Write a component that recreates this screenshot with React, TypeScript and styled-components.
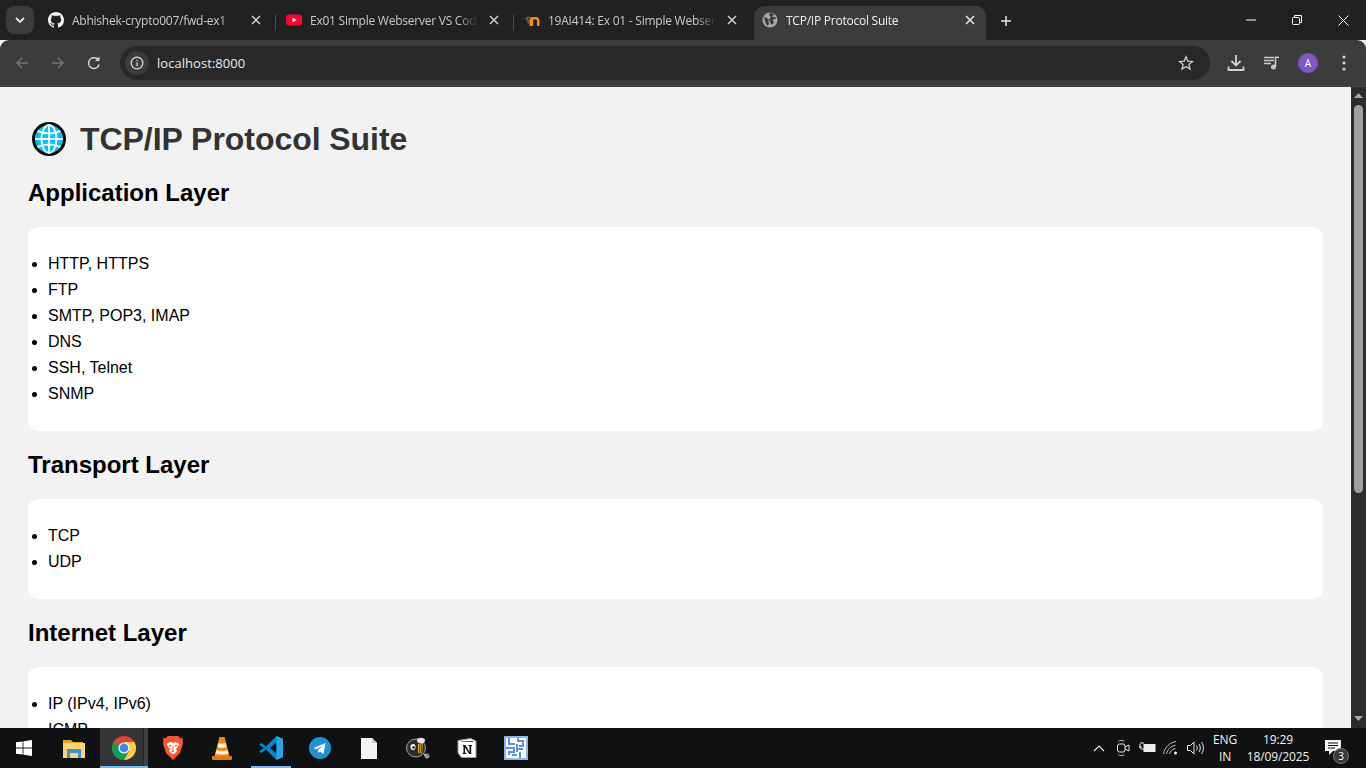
import React from "react";
import styled, { createGlobalStyle } from "styled-components";

const UI = `"Open Sans", "Noto Sans", sans-serif`;
const Global = createGlobalStyle`
  html, body { margin: 0; padding: 0; height: 100%; overflow: hidden; background: #f2f2f2; }
  #root { height: 100%; }
  * { box-sizing: border-box; }
`;
const Shell = styled.div`display:flex;flex-direction:column;width:1366px;height:768px;overflow:hidden;`;

const TabStrip = styled.div`display:flex;align-items:flex-end;height:40px;background:#202121;flex:none;position:relative;`;
const TabMenu = styled.div`width:28px;height:28px;margin:0 3px 6px 6px;border-radius:8px;background:#3a3b3b;display:flex;align-items:center;justify-content:center;flex:none;`;
const Tab = styled.div<{ $active?: boolean; $w: number; $pl: number; $pr: number }>`
  width:${p => p.$w}px;height:34px;flex:none;display:flex;align-items:center;position:relative;
  padding:0 ${p => p.$pr}px 6px ${p => p.$pl}px;color:${p => (p.$active ? "#f0f0f0" : "#c8c9c9")};
  background:${p => (p.$active ? "#3c3c3c" : "transparent")};
  border-radius:${p => (p.$active ? "10px 10px 0 0" : "0")};
`;
const Favicon = styled.span`width:16px;height:16px;flex:none;display:flex;`;
const TabTitle = styled.span`
  flex:1;min-width:0;margin:2px 8px 0;font:12px/16px ${UI};white-space:nowrap;overflow:hidden;letter-spacing:-.24px;
  -webkit-mask-image:linear-gradient(90deg,#000 calc(100% - 20px),transparent);
`;
const TabClose = styled.span`width:16px;height:16px;flex:none;display:flex;align-items:center;justify-content:center;`;
const TabSep = styled.span`width:1px;height:16px;background:#4f5050;flex:none;margin-bottom:9px;`;
const NewTab = styled.span`width:16px;height:16px;margin:0 0 11px 12px;display:flex;`;
const WindowControls = styled.div`margin-left:auto;display:flex;height:40px;align-self:flex-start;`;
const WinBtn = styled.div`width:46px;height:40px;display:flex;align-items:center;justify-content:center;`;

const Toolbar = styled.div`height:47px;background:#3c3c3c;border-radius:9px 9px 0 0;display:flex;align-items:center;flex:none;padding:0 8px 1px 4px;border-bottom:1px solid #444;`;
const NavBtn = styled.div`width:36px;height:34px;display:flex;align-items:center;justify-content:center;flex:none;`;
const Omnibox = styled.div`width:1090px;height:34px;margin-left:8px;background:#282828;border-radius:17px;display:flex;align-items:center;padding:0 15px 0 5px;margin-right:8px;flex:none;`;
const InfoChip = styled.div`width:24px;height:24px;border-radius:12px;background:#3c3c3c;display:flex;align-items:center;justify-content:center;flex:none;`;
const Url = styled.span`margin-left:8px;flex:1;font:13px/18px ${UI};color:#e8e8e8;letter-spacing:.05px;`;
const Avatar = styled.div`width:20px;height:20px;border-radius:50%;background:#7e57c2;color:#fff;font:10px/20px ${UI};text-align:center;`;

const Viewport = styled.div`flex:1;min-height:0;display:flex;overflow:hidden;background:#f2f2f2;`;
const Page = styled.main`flex:1;min-width:0;padding:33px 28px 0;font-family:"Liberation Sans",Arial,sans-serif;overflow:hidden;`;
const Title = styled.h1`margin:0 0 21px;font-size:32px;line-height:38px;font-weight:700;color:#333;display:flex;align-items:center;white-space:pre;letter-spacing:-.05px;`;
const GlobeWrap = styled.span`width:36px;height:36px;margin:0 13px 0 3px;display:flex;flex:none;`;
const LayerHeading = styled.h2`margin:20px 0;font-size:24px;line-height:28px;font-weight:700;color:#000;`;
const Card = styled.section`background:#fff;border-radius:10px;padding:8px 0;`;
const List = styled.ul`margin:16px 0;padding-left:20px;`;
const Item = styled.li`font-size:16px;line-height:26px;color:#000;`;

const Scrollbar = styled.div`width:15px;flex:none;background:#2c2c2c;display:flex;flex-direction:column;align-items:center;justify-content:space-between;padding:6px 0 7px;position:relative;`;
const Thumb = styled.div`position:absolute;left:3px;top:18px;width:9px;height:388px;border-radius:5px;background:#9f9f9f;`;

const Taskbar = styled.footer`height:40px;background:#101112;flex:none;display:flex;align-items:stretch;`;
const TaskItem = styled.div<{ $w?: number; $active?: boolean; $line?: boolean }>`
  width:${p => p.$w ?? 49}px;flex:none;display:flex;align-items:center;justify-content:center;position:relative;
  background:${p => (p.$active ? "#333435" : "transparent")};
  ${p => (p.$active ? `&::before{content:"";position:absolute;top:0;bottom:0;right:0;width:4px;background:#3f4041;border-left:1px solid #242526;}` : "")}
  ${p => (p.$active || p.$line ? `&::after{content:"";position:absolute;bottom:0;height:2px;background:#76b9ed;left:50%;transform:translateX(-50%);width:${p.$active ? 48 : 40}px;}` : "")}
`;
const Tray = styled.div`margin-left:auto;display:flex;align-items:stretch;padding-right:13px;`;
const TrayIcon = styled.div<{ $w: number }>`width:${p => p.$w}px;height:40px;display:flex;align-items:center;justify-content:center;flex:none;`;
const TrayText = styled.div<{ $w: number }>`width:${p => p.$w}px;align-self:center;text-align:center;font:12px/17px ${UI};color:#f0f0f0;flex:none;letter-spacing:-.1px;`;
const ChatWrap = styled.span`display:flex;align-self:flex-start;margin-top:12px;`;
const Badge = styled.span`position:absolute;left:20px;top:20px;width:16px;height:16px;border-radius:50%;background:#3a3a3a;border:1px solid #777;color:#fff;font:10px/14px ${UI};text-align:center;`;

const X = ({ c = "#d0d0d0" }: { c?: string }) => (
  <svg width="10" height="10" viewBox="0 0 10 10"><path d="M1 1l8 8M9 1L1 9" stroke={c} strokeWidth="1.5" fill="none" /></svg>
);
const Github = () => (
  <svg width="16" height="16" viewBox="0 0 16 16"><path fill="#f2f2f2" d="M8 0C3.58 0 0 3.58 0 8c0 3.54 2.29 6.53 5.47 7.59.4.07.55-.17.55-.38 0-.19-.01-.82-.01-1.49-2.01.37-2.53-.49-2.69-.94-.09-.23-.48-.94-.82-1.13-.28-.15-.68-.52-.01-.53.63-.01 1.08.58 1.23.82.72 1.21 1.87.87 2.33.66.07-.52.28-.87.51-1.07-1.78-.2-3.64-.89-3.64-3.95 0-.87.31-1.59.82-2.15-.08-.2-.36-1.02.08-2.12 0 0 .67-.21 2.2.82.64-.18 1.32-.27 2-.27s1.36.09 2 .27c1.53-1.04 2.2-.82 2.2-.82.44 1.1.16 1.92.08 2.12.51.56.82 1.27.82 2.15 0 3.07-1.87 3.75-3.65 3.95.29.25.54.73.54 1.48 0 1.07-.01 1.93-.01 2.2 0 .21.15.46.55.38A8.01 8.01 0 0016 8c0-4.42-3.58-8-8-8z" /></svg>
);
const Youtube = () => (
  <svg width="16" height="16" viewBox="0 0 16 16"><rect y="2.5" width="16" height="11" rx="3" fill="#ff0033" /><path d="M6.5 5.6L10.7 8l-4.2 2.4z" fill="#fff" /></svg>
);
const Moodle = () => (
  <svg width="16" height="16" viewBox="0 0 16 16"><path d="M5.500 14V8.200c0-1.800 1.200-3.200 3-3.200h3.500c2.200 0 3.500 1.400 3.500 3.400V14h-2.600V8.800c0-.8-.4-1.300-1.100-1.300h-1.600c-.7 0-1.100.5-1.100 1.300V14z" fill="#f08a24" /><path d="M0 6.500L5 4.500l2 .8-3.500 1.200V9L3 11 2.500 6.800z" fill="#77706a" /><path d="M3.500 7.500h1.500v4H3.500z" fill="#a1521c" /></svg>
);
const GlobeFav = () => (
  <svg width="16" height="16" viewBox="0 0 16 16"><circle cx="8" cy="8" r="7.500" fill="#a5a8ab" /><path d="M2 5l3 1 2 2-1 1 1 2-1 3-2-2-1-3zM8 1l3 .5 1 1.500-2 1 1 1 3 .5-.5 1.500-3 .5 1.500 3-2.500 2.500L8 10 7 7.500 9 5 7 3z" fill="#3c3c3c" /></svg>
);
const Globe = () => (
  <svg width="36" height="36" viewBox="0 0 36 36">
    <circle cx="18" cy="18" r="15.500" fill="#0cc0f5" stroke="#0a0a0a" strokeWidth="3" />
    <g fill="none" stroke="#eafaff" strokeWidth="2">
      <ellipse cx="18" cy="18" rx="7.500" ry="14" />
      <path d="M18 4v28M4 18h28M6.500 10c7 3 16 3 23 0M6.500 26c7-3 16-3 23 0" />
    </g>
  </svg>
);
const Back = ({ c }: { c: string }) => (
  <svg width="16" height="16" viewBox="0 0 16 16"><path d="M14 8H3M8 3L3 8l5 5" stroke={c} strokeWidth="1.500" fill="none" /></svg>
);
const Forward = ({ c }: { c: string }) => (
  <svg width="16" height="16" viewBox="0 0 16 16"><path d="M2 8h11M8 3l5 5-5 5" stroke={c} strokeWidth="1.500" fill="none" /></svg>
);
const Reload = () => (
  <svg width="16" height="16" viewBox="0 0 16 16"><path d="M13 9.500A5.300 5.300 0 118.500 2.800c1.700 0 3 .8 4 2" stroke="#d6d6d6" strokeWidth="1.500" fill="none" /><path d="M13.500 1.500v4.500H9z" fill="#d6d6d6" /></svg>
);
const Info = () => (
  <svg width="16" height="16" viewBox="0 0 16 16"><circle cx="8" cy="8" r="5.800" stroke="#dcdcdc" strokeWidth="1.300" fill="none" /><path d="M8 7.300v4M8 4.700v1.300" stroke="#dcdcdc" strokeWidth="1.300" /></svg>
);
const Star = () => (
  <svg width="18" height="18" viewBox="0 0 18 18"><path d="M9 2.800l1.800 4.300 4.600.4-3.500 3 1.100 4.500L9 12.600l-4 2.400 1.100-4.500-3.500-3 4.600-.4z" stroke="#c6c6c6" strokeWidth="1.400" fill="none" /></svg>
);
const Download = () => (
  <svg width="18" height="18" viewBox="0 0 18 18"><path d="M9 1v10M4.500 7L9 11.500 13.500 7" stroke="#d0d0d0" strokeWidth="1.800" fill="none" /><path d="M1.500 12.500v3.500h15v-3.500" stroke="#d0d0d0" strokeWidth="1.800" fill="none" /></svg>
);
const Music = () => (
  <svg width="16" height="14" viewBox="0 0 16 14"><path d="M0 1.500h10M0 4.500h10M0 7.500h7" stroke="#c8c8c8" strokeWidth="1.500" /><path d="M11.500 11V1.200H15" stroke="#c8c8c8" strokeWidth="1.600" fill="none" /><circle cx="9.500" cy="11" r="2.500" fill="#c8c8c8" /></svg>
);
const Dots = () => (
  <svg width="4" height="16" viewBox="0 0 4 16"><circle cx="2" cy="2" r="1.600" fill="#d0d0d0" /><circle cx="2" cy="8" r="1.600" fill="#d0d0d0" /><circle cx="2" cy="14" r="1.600" fill="#d0d0d0" /></svg>
);
const Tri = ({ down }: { down?: boolean }) => (
  <svg width="9" height="5" viewBox="0 0 9 5"><path d={down ? "M0 0h9L4.500 5z" : "M0 5h9L4.500 0z"} fill="#a8a8a8" /></svg>
);
const WinLogo = () => (
  <svg width="16" height="16" viewBox="0 0 16 16"><path fill="#fff" d="M0 2.300l6.600-.9v6.200H0zM7.400 1.300L16 0v7.600H7.400zM0 8.400h6.600v6.200L0 13.700zM7.400 8.400H16V16l-8.600-1.200z" /></svg>
);
const Files = () => (
  <svg width="22" height="20" viewBox="0 0 22 20"><path d="M0 2h8l2 2h10v3H0z" fill="#e0a530" /><rect y="5" width="22" height="15" fill="#fcd36c" /><path d="M4 11h14v9h-3v-5H7v5H4z" fill="#3c8fd8" /></svg>
);
const Chrome = () => (
  <svg width="24" height="24" viewBox="0 0 24 24">
    <circle cx="12" cy="12" r="12" fill="#db4437" />
    <path d="M12 12L1.600 6 0 12c0 6.600 5.400 12 12 12l5-7z" fill="#0f9d58" />
    <path d="M12 6h10.400A12 12 0 0124 12c0 6.600-5.400 12-12 12l5.200-9z" fill="#ffcd40" />
    <circle cx="12" cy="12" r="5.600" fill="#fff" />
    <circle cx="12" cy="12" r="4.400" fill="#4285f4" />
  </svg>
);
const Brave = () => (
  <svg width="20" height="24" viewBox="0 0 20 24"><path d="M5 0h10l2 2 3 .5-.5 3 .5 2-3 9.500L10 24l-7-7L0 7.500l.5-2L0 2.500 3 2z" fill="#fb542b" /><path d="M5 7l3-1 2 1 2-1 3 1 1.500 1.500L13 13l1 2-3 3H9l-3-3 1-2-3.500-4.500z" fill="#fff" /><path d="M9 14.500h2v1.500H9zM6 9h2v1.500H6zM12 9h2v1.500h-2zM9.500 10h1v4h-1z" fill="#fb542b" /></svg>
);
const Vlc = () => (
  <svg width="20" height="24" viewBox="0 0 20 24"><path d="M7.500 1h5l5 19h-15z" fill="#f38a12" /><path d="M6.500 7c2 1 5 1 7 0l1 4c-2.500 1.200-6.500 1.200-9 0zM4.500 14c3 1.200 8 1.200 11 0l1 3.500c-3.500 1.300-9.500 1.300-13 0z" fill="#f1efe9" /><rect y="20" width="20" height="4" rx="1" fill="#e07a0a" /></svg>
);
const VsCode = () => (
  <svg width="24" height="24" viewBox="0 0 24 24"><path d="M17.500 0L24 3v18l-6.500 3L7 13.500 2.500 17 0 15.500 4.500 12 0 8.500 2.500 7 7 10.500z" fill="#0a84d0" /><path d="M17.500 6.500L11 12l6.500 5.500z" fill="#101112" /><path d="M17.500 0L24 3v18l-6.500 3z" fill="#25a5ea" /></svg>
);
const Telegram = () => (
  <svg width="22" height="22" viewBox="0 0 22 22"><circle cx="11" cy="11" r="11" fill="#1d93d2" /><path d="M4.500 11l12-5-2 11-3.500-2.600-1.700 1.700-.4-3.200 5.600-4.900-7 4.300z" fill="#fff" /></svg>
);
const FileIcon = () => (
  <svg width="16" height="21" viewBox="0 0 16 21"><path d="M0 0h11l5 5v16H0z" fill="#f3f3f3" /><path d="M11 0l5 5h-5z" fill="#c9c9c9" /></svg>
);
const Bee = () => (
  <svg width="24" height="22" viewBox="0 0 24 22">
    <ellipse cx="10" cy="11" rx="9.500" ry="9" fill="#2d2d2d" stroke="#c8c8c8" strokeWidth=".8" />
    <ellipse cx="7" cy="10" rx="2.500" ry="3" fill="#fff" /><circle cx="7.500" cy="10.500" r="1.300" fill="#111" />
    <path d="M12 7l5-1-1 11-4-1z" fill="#e8b020" /><path d="M14 7l-.5 9M16 7l-1 10" stroke="#222" strokeWidth=".8" />
    <ellipse cx="15" cy="3.500" rx="4" ry="2.800" fill="#dfe6f0" />
    <path d="M18 17l4 3" stroke="#ccc" strokeWidth="1.500" /><circle cx="21" cy="19" r="2" fill="none" stroke="#ccc" />
  </svg>
);
const Notion = () => (
  <svg width="20" height="20" viewBox="0 0 20 20"><path d="M1 2.500L13.500.5 19 3v16.500L4.500 19.500 1 15z" fill="#fff" stroke="#9a9a9a" strokeWidth="1" /><path d="M4 3.500L16 3v1H4.500z" fill="#333" /><path d="M6 7h2.500l4 7V8.200l-1-.3V7h3.500v1l-.8.200V16h-2L8 9.500V14.800l1.200.3V16H5.600v-1l.9-.200V8.200L6 8z" fill="#111" /></svg>
);
const Maze = () => (
  <svg width="24" height="24" viewBox="0 0 24 24"><rect width="24" height="24" fill="#8cb4f5" /><path d="M2 2h20v20H2z" fill="#fff" /><path d="M5 2v6h6M14 2v3h5v5h-4M2 12h8v4H5v3M13 8v8M13 13h6M16 16v6M8 19h5" stroke="#5d90ea" strokeWidth="2" fill="none" /></svg>
);
const Chevron = () => (
  <svg width="12" height="8" viewBox="0 0 12 8"><path d="M1 7l5-5 5 5" stroke="#e8e8e8" strokeWidth="1.200" fill="none" /></svg>
);
const Camera = () => (
  <svg width="14" height="18" viewBox="0 0 14 18"><rect x="1.500" y="5" width="7.500" height="8" rx="2" stroke="#e8e8e8" fill="none" /><path d="M9 8l4-2v6l-4-2" stroke="#e8e8e8" fill="none" /><path d="M2 2.500c1.500-1.500 5-1.500 6.500 0M2 15.500c1.500 1.500 5 1.500 6.500 0" stroke="#bbb" fill="none" /></svg>
);
const Battery = () => (
  <svg width="17" height="12" viewBox="0 0 17 12"><rect x="5" y="2.500" width="11" height="7" stroke="#eee" fill="#eee" /><path d="M0 5h3M1 2v3.500c0 1 1 1.500 2 1.500h2M2 0v2M4 0v2" stroke="#eee" fill="none" /></svg>
);
const Wifi = () => (
  <svg width="16" height="14" viewBox="0 0 16 14" fill="none" stroke="#bdbdbd"><path d="M.5 13C1.500 6.500 6.500 1.500 13 .5M3.500 13c.8-4.500 4-7.700 9-8.800M6.500 13c.5-2.500 2.500-4.800 6-5.500" /><circle cx="12.500" cy="12" r="1.500" fill="#eee" stroke="none" /></svg>
);
const Volume = () => (
  <svg width="17" height="14" viewBox="0 0 17 14" fill="none" stroke="#e8e8e8"><path d="M.5 4.500h3L7 1v12L3.500 9.500h-3zM9.500 4.500c1 1.500 1 3.500 0 5M12 3c1.700 2.500 1.700 5.500 0 8M14.500 1c2.500 3.500 2.500 8.500 0 12" /></svg>
);
const Chat = () => (
  <svg width="16" height="15" viewBox="0 0 16 15"><path d="M0 0h16v11H8l-4 4v-4H0z" fill="#f5f5f5" /><path d="M3 3h10M3 5.500h10M3 8h7" stroke="#101112" /></svg>
);

const layers = [
  { name: "Application Layer", items: ["HTTP, HTTPS", "FTP", "SMTP, POP3, IMAP", "DNS", "SSH, Telnet", "SNMP"] },
  { name: "Transport Layer", items: ["TCP", "UDP"] },
  { name: "Internet Layer", items: ["IP (IPv4, IPv6)", "ICMP", "ARP"] },
];

export default function App() {
  return (
    <Shell>
      <Global />
      <TabStrip>
        <TabMenu>
          <svg width="10" height="6" viewBox="0 0 10 6"><path d="M1 1l4 4 4-4" stroke="#e6e6e6" strokeWidth="1.800" fill="none" /></svg>
        </TabMenu>
        <Tab $w={238} $pl={11} $pr={11}><Favicon><Github /></Favicon><TabTitle>Abhishek-crypto007/fwd-ex1</TabTitle><TabClose><X /></TabClose></Tab>
        <TabSep />
        <Tab $w={237} $pl={10} $pr={11}><Favicon><Youtube /></Favicon><TabTitle>Ex01 Simple Webserver VS Code</TabTitle><TabClose><X /></TabClose></Tab>
        <TabSep />
        <Tab $w={240} $pl={10} $pr={14}><Favicon><Moodle /></Favicon><TabTitle>19AI414: Ex 01 - Simple Webserver</TabTitle><TabClose><X /></TabClose></Tab>
        <Tab $active $w={232} $pl={8} $pr={8}><Favicon><GlobeFav /></Favicon><TabTitle>TCP/IP Protocol Suite</TabTitle><TabClose><X c="#e8e8e8" /></TabClose></Tab>
        <NewTab>
          <svg width="16" height="16" viewBox="0 0 16 16"><path d="M8 3v10M3 8h10" stroke="#e6e6e6" strokeWidth="1.500" /></svg>
        </NewTab>
        <WindowControls>
          <WinBtn><svg width="10" height="10" viewBox="0 0 10 10"><path d="M0 5h10" stroke="#fff" /></svg></WinBtn>
          <WinBtn><svg width="10" height="10" viewBox="0 0 10 10" fill="none" stroke="#fff"><rect x=".5" y="2.500" width="7" height="7" rx="1" /><path d="M2.500 2.500V.5h7v7h-2" /></svg></WinBtn>
          <WinBtn><svg width="11" height="11" viewBox="0 0 11 11"><path d="M.5.5l10 10M10.500.5l-10 10" stroke="#fff" /></svg></WinBtn>
        </WindowControls>
      </TabStrip>
      <Toolbar>
        <NavBtn><Back c="#757575" /></NavBtn>
        <NavBtn><Forward c="#757575" /></NavBtn>
        <NavBtn><Reload /></NavBtn>
        <Omnibox>
          <InfoChip><Info /></InfoChip>
          <Url>localhost:8000</Url>
          <Star />
        </Omnibox>
        <NavBtn><Download /></NavBtn>
        <NavBtn><Music /></NavBtn>
        <NavBtn><Avatar>A</Avatar></NavBtn>
        <NavBtn><Dots /></NavBtn>
      </Toolbar>
      <Viewport>
        <Page>
          <Title><GlobeWrap><Globe /></GlobeWrap>TCP/IP Protocol Suite</Title>
          {layers.map(l => (
            <React.Fragment key={l.name}>
              <LayerHeading>{l.name}</LayerHeading>
              <Card>
                <List>{l.items.map(i => <Item key={i}>{i}</Item>)}</List>
              </Card>
            </React.Fragment>
          ))}
        </Page>
        <Scrollbar><Tri /><Thumb /><Tri down /></Scrollbar>
      </Viewport>
      <Taskbar>
        <TaskItem $w={48}><WinLogo /></TaskItem>
        <TaskItem $w={52}><Files /></TaskItem>
        <TaskItem $active $w={48}><Chrome /></TaskItem>
        <TaskItem><Brave /></TaskItem>
        <TaskItem><Vlc /></TaskItem>
        <TaskItem $line><VsCode /></TaskItem>
        <TaskItem><Telegram /></TaskItem>
        <TaskItem><FileIcon /></TaskItem>
        <TaskItem><Bee /></TaskItem>
        <TaskItem><Notion /></TaskItem>
        <TaskItem><Maze /></TaskItem>
        <Tray>
          <TrayIcon $w={24}><Chevron /></TrayIcon>
          <TrayIcon $w={24}><Camera /></TrayIcon>
          <TrayIcon $w={24}><Battery /></TrayIcon>
          <TrayIcon $w={24}><Wifi /></TrayIcon>
          <TrayIcon $w={24}><Volume /></TrayIcon>
          <TrayText $w={36}>ENG<br />IN</TrayText>
          <TrayText $w={70}>19:29<br />18/09/2025</TrayText>
          <TaskItem $w={40}><ChatWrap><Chat /></ChatWrap><Badge>3</Badge></TaskItem>
        </Tray>
      </Taskbar>
    </Shell>
  );
}
